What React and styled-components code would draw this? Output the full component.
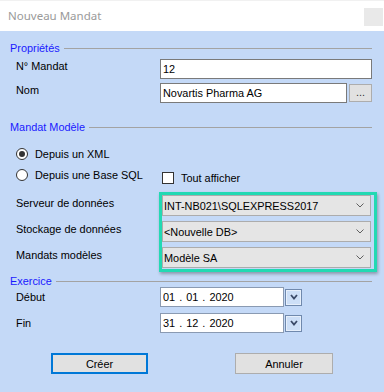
import React from "react";
import styled, { createGlobalStyle } from "styled-components";

const Global = createGlobalStyle`
  html, body { margin: 0; padding: 0; }
  body {
    font-family: "Liberation Sans", Arial, sans-serif;
    font-size: 10.9px;
    color: #000;
    background: #c4d9f7;
  }
  * { box-sizing: border-box; }
`;

const Window = styled.div`
  width: 384px;
  height: 392px;
  display: flex;
  flex-direction: column;
  background: #c4d9f7;
  overflow: hidden;
`;

const TitleBar = styled.div`
  height: 31px;
  flex: none;
  background: #fff;
  display: flex;
  justify-content: space-between;
  align-items: flex-start;
  padding-left: 8px;
  border-top: 1px solid #f1f1f1;
`;

const Title = styled.div`
  font-family: "Noto Sans", "Open Sans", sans-serif;
  font-size: 11.5px;
  line-height: 30px;
  color: #9a9a9a;
`;

const CloseBox = styled.div`
  width: 19px;
  height: 18px;
  margin-top: 7px;
  margin-right: 1px;
  background: #e9e9e9;
`;

const Body = styled.div`
  flex: 1;
  display: flex;
  flex-direction: column;
  padding: 10px 12px 0 10px;
`;

const SectionHeader = styled.div`
  display: flex;
  align-items: center;
  gap: 4px;
  height: ${(p) => p.$h || 14}px;
  margin-top: ${(p) => p.$mt || 0}px;
  color: #1a1aff;
  white-space: nowrap;
`;

const Rule = styled.div`
  flex: 1;
  height: 1px;
  background: #a3a3a3;
`;

const FieldRow = styled.div`
  display: grid;
  grid-template-columns: 150px 1fr;
  align-items: start;
  margin-top: ${(p) => p.$mt || 0}px;
`;

const Label = styled.div`
  padding-left: 6px;
  padding-top: ${(p) => p.$pt || 0}px;
  line-height: 14px;
  white-space: nowrap;
`;

const Control = styled.div`
  display: flex;
  align-items: center;
  gap: ${(p) => p.$gap || 0}px;
`;

const TextInput = styled.input`
  flex: 1;
  min-width: 0;
  height: 20px;
  margin: 0;
  padding: 0 2px;
  border: 1px solid #7a7a7a;
  background: #fff;
  font: inherit;
  color: #000;
  outline: none;
`;

const SmallButton = styled.button`
  width: 23px;
  height: 18px;
  margin: 0;
  padding: 0 0 3px;
  border: 1px solid #adadad;
  background: #e1e1e1;
  font: inherit;
  color: #333;
  display: flex;
  align-items: flex-end;
  justify-content: center;
`;

const RadioRow = styled.div`
  display: flex;
  align-items: center;
  gap: 7px;
  height: 16px;
  padding-left: 6px;
  white-space: nowrap;
`;

const RadioCircle = styled.span`
  width: 12px;
  height: 12px;
  border-radius: 50%;
  border: 1px solid #333;
  background: #fff;
  display: flex;
  align-items: center;
  justify-content: center;
  &::after {
    content: "";
    width: 6px;
    height: 6px;
    border-radius: 50%;
    background: ${(p) => (p.$checked ? "#333" : "transparent")};
  }
`;

const CheckRow = styled.div`
  display: flex;
  align-items: center;
  gap: 7px;
  margin-top: 5px;
  padding-left: 2px;
  white-space: nowrap;
`;

const CheckBox = styled.span`
  width: 12px;
  height: 12px;
  border: 1px solid #333;
  background: #fff;
`;

const ComboSection = styled.div`
  display: grid;
  grid-template-columns: 149px 1fr;
  margin-top: 8px;
  margin-right: -5px;
`;

const LabelStack = styled.div`
  display: flex;
  flex-direction: column;
  gap: 12px;
  padding-top: 4px;
`;

const Highlight = styled.div`
  display: flex;
  flex-direction: column;
  gap: 5px;
  border: 3px solid #22d9b3;
  padding: 0 3px 1px 0;
  box-shadow: 1px 2px 3px rgba(0, 0, 0, 0.3);
`;

const Combo = styled.div`
  height: 21px;
  display: flex;
  align-items: center;
  justify-content: space-between;
  padding: 0 6px 0 1px;
  background: #e5e5e5;
  border: 1px solid #acacac;
  white-space: nowrap;
`;

const DateInput = styled.input`
  width: 124px;
  height: 20px;
  margin: 0;
  padding: 0 2px;
  border: 1px solid #8a9ab2;
  background: #fff;
  font: inherit;
  word-spacing: 1px;
  color: #000;
  outline: none;
`;

const DateButton = styled.div`
  width: 17px;
  height: 17px;
  border: 1px solid #7089ad;
  background: #cddff7;
  box-shadow: inset 0 0 0 1px #e6effb;
  display: flex;
  align-items: center;
  justify-content: center;
`;

const ButtonRow = styled.div`
  display: flex;
  gap: 87px;
  padding-left: 41px;
  margin-top: 20px;
`;

const DialogButton = styled.button`
  width: ${(p) => p.$w}px;
  height: 21px;
  margin: 0;
  padding: 0;
  background: #e1e1e1;
  border: ${(p) => (p.$primary ? "2px solid #0078d7" : "1px solid #adadad")};
  font: inherit;
  color: #000;
`;

const Chevron = () => (
  <svg width="8" height="5" viewBox="0 0 8 5">
    <path d="M0.5 0.5 L4 4 L7.5 0.5" fill="none" stroke="#606060" strokeWidth="1" />
  </svg>
);

const DateChevron = () => (
  <svg width="8" height="6" viewBox="0 0 8 6">
    <path d="M1 1 L4 4.5 L7 1" fill="none" stroke="#3a4a68" strokeWidth="1.8" />
  </svg>
);

const combos = [
  ["Serveur de données", "INT-NB021\\SQLEXPRESS2017"],
  ["Stockage de données", "<Nouvelle DB>"],
  ["Mandats modèles", "Modèle SA"],
];

const dates = [
  ["Début", "01 . 01 . 2020", 0],
  ["Fin", "31 . 12 . 2020", 6],
];

export default function App() {
  return (
    <>
      <Global />
      <Window>
        <TitleBar>
          <Title>Nouveau Mandat</Title>
          <CloseBox />
        </TitleBar>
        <Body>
          <SectionHeader $mt={0}>
            Propriétés
            <Rule />
          </SectionHeader>
          <FieldRow $mt={4}>
            <Label>N° Mandat</Label>
            <Control>
              <TextInput readOnly value="12" />
            </Control>
          </FieldRow>
          <FieldRow $mt={4}>
            <Label>Nom</Label>
            <Control $gap={2}>
              <TextInput readOnly value="Novartis Pharma AG" />
              <SmallButton>...</SmallButton>
            </Control>
          </FieldRow>

          <SectionHeader $mt={17}>
            Mandat Modèle
            <Rule />
          </SectionHeader>
          <FieldRow $mt={12}>
            <RadioRow>
              <RadioCircle $checked />
              Depuis un XML
            </RadioRow>
          </FieldRow>
          <FieldRow $mt={5}>
            <RadioRow>
              <RadioCircle />
              Depuis une Base SQL
            </RadioRow>
            <CheckRow>
              <CheckBox />
              Tout afficher
            </CheckRow>
          </FieldRow>

          <ComboSection>
            <LabelStack>
              {combos.map(([l]) => (
                <Label key={l}>{l}</Label>
              ))}
            </LabelStack>
            <Highlight>
              {combos.map(([l, v]) => (
                <Combo key={l}>
                  <span>{v}</span>
                  <Chevron />
                </Combo>
              ))}
            </Highlight>
          </ComboSection>

          <SectionHeader $mt={3} $h={12}>
            Exercice
            <Rule />
          </SectionHeader>
          {dates.map(([l, v, mt]) => (
            <FieldRow key={l} $mt={mt}>
              <Label $pt={3}>{l}</Label>
              <Control $gap={1}>
                <DateInput readOnly value={v} />
                <DateButton>
                  <DateChevron />
                </DateButton>
              </Control>
            </FieldRow>
          ))}

          <ButtonRow>
            <DialogButton $primary $w={97}>Créer</DialogButton>
            <DialogButton $w={98}>Annuler</DialogButton>
          </ButtonRow>
        </Body>
      </Window>
    </>
  );
}
